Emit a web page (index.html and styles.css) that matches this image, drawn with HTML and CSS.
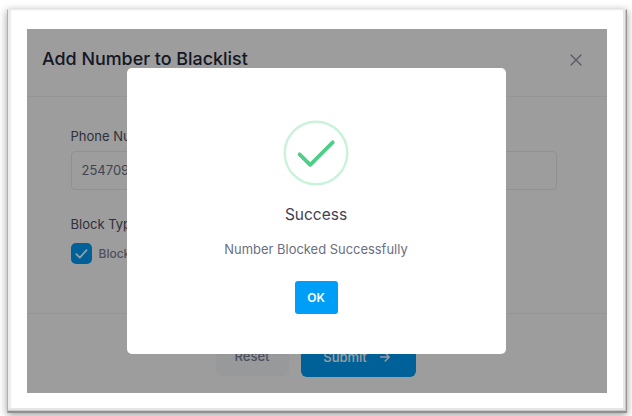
FILE: index.html
```html
<!DOCTYPE html>
<html lang="en">
<head>
    <meta charset="UTF-8">
    <meta name="viewport" content="width=device-width, initial-scale=1.0">
    <title>Add Number to Blacklist</title>
    <link rel="stylesheet" href="styles.css">
</head>
<body>
    <div class="frame">
        <div class="modal">
            <div class="modal-header">
                <h2>Add Number to Blacklist</h2>
                <svg class="close" viewBox="0 0 12 12"><path d="M1 1L11 11M11 1L1 11"/></svg>
            </div>
            <div class="modal-body">
                <div class="label">Phone Number</div>
                <div class="input">254709</div>
                <div class="label block-label">Block Type</div>
                <div class="check-row">
                    <span class="checkbox">
                        <svg viewBox="0 0 21 21"><path d="M5.3 11.2L8.8 14.6L15.6 7.2"/></svg>
                    </span>
                    <span>Block</span>
                </div>
            </div>
            <div class="modal-footer">
                <div class="btn reset">Reset</div>
                <div class="btn submit">
                    Submit
                    <svg viewBox="0 0 10 10"><path d="M0.5 5H9M5.2 1L9.2 5L5.2 9"/></svg>
                </div>
            </div>
            <div class="overlay">
                <div class="alert">
                    <svg class="success-icon" viewBox="0 0 66 66">
                        <circle cx="33" cy="33" r="31.3"/>
                        <path d="M16.6 34.3L27.2 44.8L49.7 22.3"/>
                    </svg>
                    <div class="alert-title">Success</div>
                    <div class="alert-text">Number Blocked Successfully</div>
                    <button class="ok">OK</button>
                </div>
            </div>
        </div>
    </div>
</body>
</html>
```

FILE: styles.css
```css
* {
    box-sizing: border-box;
}
body {
    margin: 0;
    height: 416px;
    padding: 9px 5px 3px 7px;
    overflow: hidden;
    background-color: #fff;
    font-family: Inter, sans-serif;
    color: #3f4254;
}
.frame {
    width: 620px;
    height: 404px;
    padding: 19px;
    background-color: #fff;
    border: 1px solid;
    border-color: #ececec #949494 #909090 #b0b0b0;
    border-bottom-width: 2px;
    box-shadow: 0 2px 8px rgba(0, 0, 0, 0.4), inset -1px -1px 0 #c8c8c8, inset -3px -3px 0 #e6e6e6, inset 3px 0 2px #ececec;
}
.modal {
    position: relative;
    display: flex;
    flex-direction: column;
    width: 580px;
    height: 364px;
    background-color: #fff;
}
.modal-header {
    display: flex;
    justify-content: space-between;
    height: 68px;
    padding: 19px 25px 0 15px;
    border-bottom: 1px solid #eff2f5;
}
h2 {
    margin: 0;
    font-size: 17.9px;
    line-height: 22px;
    font-weight: 550;
    color: #24273c;
}
svg {
    display: block;
    fill: none;
    stroke-linecap: round;
    stroke-linejoin: round;
}
.close {
    width: 12px;
    height: 12px;
    margin-top: 6px;
    stroke: #8e91a5;
    stroke-width: 1.3;
}
.modal-body {
    flex: 1;
    padding: 30px 50px 0 43.5px;
}
.label {
    font-size: 13px;
    line-height: 18px;
    font-weight: 400;
    color: #4c4f62;
}
.input {
    width: 486.5px;
    height: 39px;
    margin-top: 6px;
    padding-left: 10px;
    border: 1px solid #e9ebef;
    border-radius: 4px;
    font-size: 13px;
    line-height: 37px;
    color: #6c6f82;
}
.block-label {
    margin-top: 25px;
}
.check-row {
    display: flex;
    align-items: center;
    gap: 7px;
    margin-top: 9.5px;
    font-size: 12px;
    font-weight: 450;
    color: #7e8299;
}
.checkbox {
    width: 21px;
    height: 21px;
    border-radius: 5px;
    background-color: #009ef7;
}
.checkbox svg {
    stroke: #fff;
    stroke-width: 1.7;
}
.modal-footer {
    display: flex;
    justify-content: center;
    gap: 12px;
    height: 80px;
    padding: 22px 3px 0 0;
    border-top: 1px solid #eff2f5;
}
.btn {
    display: flex;
    align-items: center;
    justify-content: center;
    height: 41px;
    border-radius: 6px;
    font-size: 13px;
    font-weight: 550;
}
.reset {
    width: 73px;
    height: 40px;
    background-color: #f5f8fa;
    color: #7e8299;
}
.submit {
    gap: 13px;
    width: 115px;
    padding-right: 3px;
    background-color: #009ef7;
    color: #fff;
}
.submit svg {
    width: 10px;
    height: 10px;
    stroke: #fff;
    stroke-width: 1.4;
}
.overlay {
    position: absolute;
    inset: 0;
    padding: 39px 0 0 100px;
    background-color: rgba(0, 0, 0, 0.385);
}
.alert {
    display: flex;
    flex-direction: column;
    align-items: center;
    width: 379px;
    height: 286px;
    padding: 52px 1px 0 0;
    border-radius: 5px;
    background-color: #fff;
}
.success-icon {
    width: 66px;
    height: 66px;
}
.success-icon circle {
    stroke: #c9f2da;
    stroke-width: 2.4;
}
.success-icon path {
    stroke: #50cd89;
    stroke-width: 3.8;
}
.alert-title {
    margin-top: 18px;
    font-size: 15.5px;
    line-height: 22px;
    font-weight: 400;
}
.alert-text {
    margin-top: 14px;
    font-size: 12.95px;
    line-height: 18px;
    color: #6c6f82;
}
.ok {
    width: 43px;
    height: 33px;
    margin-top: 23px;
    padding: 0;
    border: none;
    border-radius: 3px;
    background-color: #009ef7;
    color: #fff;
    font-family: inherit;
    font-size: 12px;
    font-weight: 600;
}
```
